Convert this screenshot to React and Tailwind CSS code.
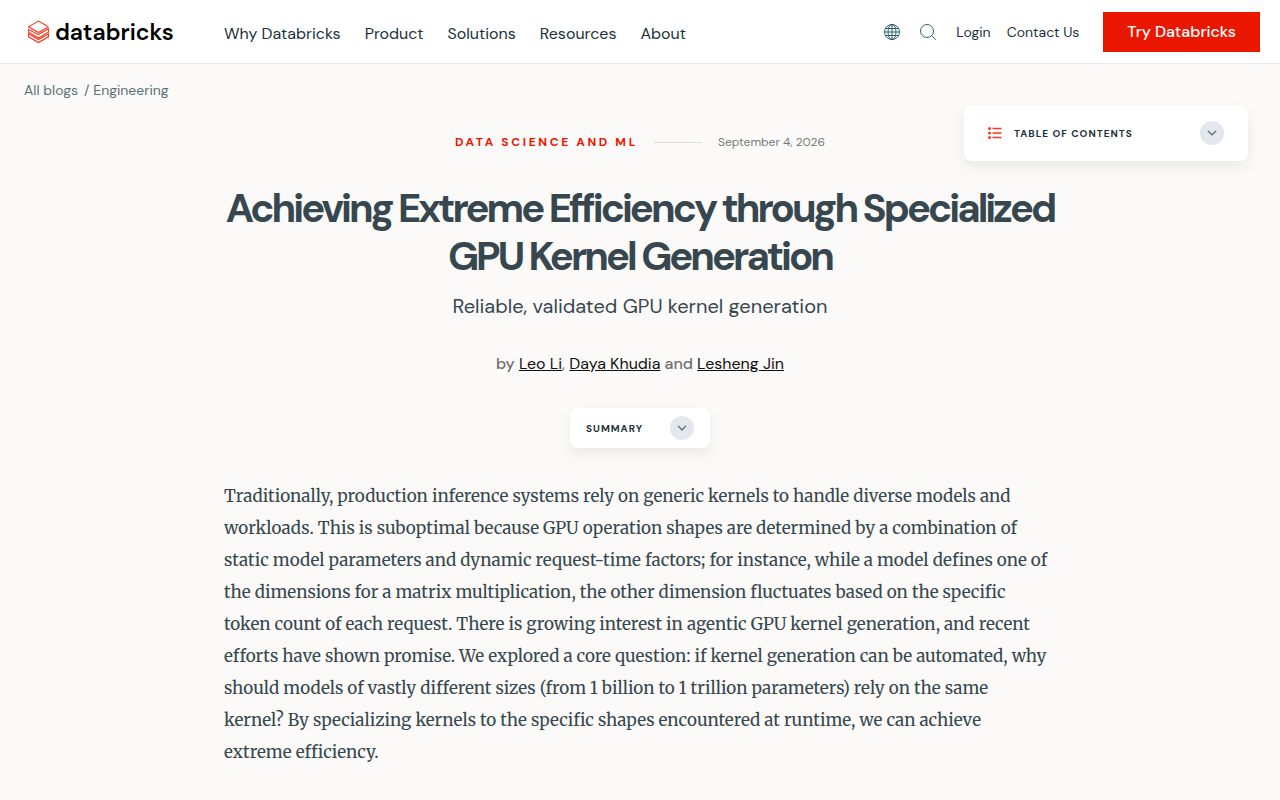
import { useState } from 'react';

const navItems = ['Why Databricks', 'Product', 'Solutions', 'Resources', 'About'];

function Logo() {
  return (
    <a href="#home" aria-label="databricks" className="flex items-center gap-1.5 text-black">
      <svg width="21" height="24" viewBox="0 0 21 24" fill="none" stroke="#ff3621" strokeWidth="1.1" strokeLinejoin="miter">
        <path d="M20.5 6.8 10.5 12.6.5 6.8 10.5 1.1 19.5 6.2" />
        <path d="M.5 9.6V12.2L10.5 18 20.5 12.2V8.8L10.5 14.6Z" />
        <path d="M.5 13.8V16.8L10.5 22.5 20.5 16.8V13.9L10.5 19.6Z" />
      </svg>
      <span className="text-[23px] leading-6 font-semibold">databricks</span>
    </a>
  );
}

function GlobeIcon() {
  return (
    <svg width="16" height="16" viewBox="0 0 16 16" fill="none" stroke="#1b5162" strokeWidth="0.9">
      <circle cx="8" cy="8" r="7.5" />
      <ellipse cx="8" cy="8" rx="4" ry="7.5" />
      <path d="M8 .5v15M.5 8h15M1.5 4.5h13M1.5 11.5h13" />
    </svg>
  );
}

function SearchIcon() {
  return (
    <svg width="16" height="16" viewBox="0 0 16 16" fill="none" stroke="#1b5162" strokeWidth="0.9">
      <circle cx="7" cy="7" r="6.5" />
      <path d="m11.6 11.6 4.2 4.2" />
    </svg>
  );
}

function ListIcon() {
  return (
    <svg width="14" height="14" viewBox="0 0 14 14" stroke="#ff3621" fill="#ff3621">
      <g stroke="none">
        <circle cx="1.5" cy="2.5" r="1.5" />
        <circle cx="1.5" cy="7" r="1.5" />
        <circle cx="1.5" cy="11.5" r="1.5" />
      </g>
      <path d="M4.5 2.5h9M4.5 7h9M4.5 11.5h9" strokeWidth="1.4" />
    </svg>
  );
}

function ChevronBadge({ open }) {
  return (
    <span className="flex size-6 items-center justify-center rounded-full bg-[#e3e8ee]">
      <svg
        width="10"
        height="6"
        viewBox="0 0 10 6"
        fill="none"
        stroke="#4a6068"
        strokeWidth="1.2"
        className={open ? 'rotate-180' : ''}
      >
        <path d="m1 .8 4 4 4-4" />
      </svg>
    </span>
  );
}

export default function App() {
  const [tocOpen, setTocOpen] = useState(false);
  const [summaryOpen, setSummaryOpen] = useState(false);

  return (
    <div className="relative min-h-screen bg-[#fbfaf8] font-['DM_Sans',Inter,sans-serif] text-[#1b3139]">
      <header className="flex h-16 items-center border-b border-[#ebebea] bg-white pr-5 pl-7">
        <div className="w-49">
          <Logo />
        </div>
        <nav className="flex gap-6 pt-1 text-base">
          {navItems.map((item) => (
            <a key={item} href="#menu" className="whitespace-nowrap">
              {item}
            </a>
          ))}
        </nav>
        <div className="ml-auto flex items-center text-sm">
          <button aria-label="Language" className="mr-5">
            <GlobeIcon />
          </button>
          <button aria-label="Search" className="mr-5">
            <SearchIcon />
          </button>
          <a href="#login" className="mr-4">Login</a>
          <a href="#contact" className="mr-6 whitespace-nowrap">Contact Us</a>
          <a
            href="#try"
            className="flex h-10 items-center bg-[#eb1600] px-6 text-base font-medium whitespace-nowrap text-white"
          >
            Try Databricks
          </a>
        </div>
      </header>

      {/* Floating table of contents */}
      <button
        aria-expanded={tocOpen}
        onClick={() => setTocOpen(!tocOpen)}
        className="absolute top-[105px] right-8 flex h-14 w-71 items-center rounded-lg bg-white px-6 shadow-[0_6px_14px_rgba(0,0,0,0.07)]"
      >
        <ListIcon />
        <span className="ml-3 text-[10px] font-bold tracking-[1px]">TABLE OF CONTENTS</span>
        <span className="ml-auto">
          <ChevronBadge open={tocOpen} />
        </span>
      </button>

      <div className="px-6 pt-4">
        <nav aria-label="Breadcrumb" className="flex gap-1.5 text-sm text-[#5a6f77]">
          <a href="#blogs">All blogs</a>
          <span>
            / <a href="#engineering">Engineering</a>
          </span>
        </nav>
      </div>

      <main className="mx-auto max-w-[832px] pt-8">
        <div className="flex items-center justify-center gap-4 text-xs leading-5">
          <a href="#category" className="font-bold tracking-[0.22em] text-[#eb1600]">DATA SCIENCE AND ML</a>
          <span className="h-px w-12 bg-[#dcdcdc]"></span>
          <time dateTime="2026-09-04" className="text-[#77787a]">September 4, 2026</time>
        </div>

        <h1 className="mt-8 text-center text-[40px] leading-12 font-bold tracking-[-3px] text-[#36474f]">
          Achieving Extreme Efficiency through Specialized GPU Kernel Generation
        </h1>
        <p className="mt-3 text-center text-xl leading-7 text-[#36474f]">
          Reliable, validated GPU kernel generation
        </p>
        <p className="mt-8 text-center text-base leading-6 text-[#6f6f6f]">
          <span className="font-medium">by</span>{' '}
          <a href="#leo" className="text-[#111] underline">Leo Li</a>,{' '}
          <a href="#daya" className="text-[#111] underline">Daya Khudia</a>
          <span className="font-medium"> and </span>
          <a href="#lesheng" className="text-[#111] underline">Lesheng Jin</a>
        </p>

        <div className="mt-8 flex justify-center">
          <button
            aria-expanded={summaryOpen}
            onClick={() => setSummaryOpen(!summaryOpen)}
            className="flex h-10 w-35 items-center justify-between rounded-lg bg-white px-4 shadow-[0_6px_14px_rgba(0,0,0,0.07)]"
          >
            <span className="text-[10px] font-bold tracking-[1px]">SUMMARY</span>
            <ChevronBadge open={summaryOpen} />
          </button>
        </div>

        <p className="mt-8 pr-1.5 pb-8 font-[Merriweather,'DejaVu_Serif_Condensed','DejaVu_Serif',serif] text-[17px] leading-8 text-[#36474f]">
          Traditionally, production inference systems rely on generic kernels to handle diverse models and workloads.
          This is suboptimal because GPU operation shapes are determined by a combination of static model parameters
          and dynamic request-time factors; for instance, while a model defines one of the dimensions for a matrix
          multiplication, the other dimension fluctuates based on the specific token count of each request. There is
          growing interest in agentic GPU kernel generation, and recent efforts have shown promise. We explored a core
          question: if kernel generation can be automated, why should models of vastly different sizes (from 1 billion
          to 1 trillion parameters) rely on the same kernel? By specializing kernels to the specific shapes encountered
          at runtime, we can achieve extreme efficiency.
        </p>
      </main>
    </div>
  );
}
